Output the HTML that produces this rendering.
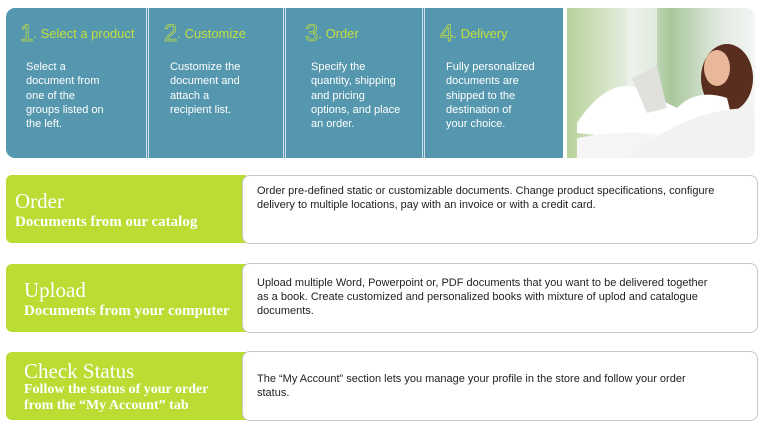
<!DOCTYPE html>
<html><head><style>
*{margin:0;padding:0;box-sizing:border-box}
body{width:763px;height:431px;background:#fff;position:relative;overflow:hidden;font-family:"Liberation Sans",sans-serif}
.panel{position:absolute;left:6px;top:8px;width:557px;height:150px;background:#5597ae;border-radius:9px 0 0 9px}
.div{position:absolute;top:8px;height:150px;width:3px;border-left:1px solid #cfe0e6;border-right:1px solid #cfe0e6;background:#5597ae}
.col{position:absolute;top:8px;color:#fff;font-size:11px;line-height:14.3px}
.col h{display:block;color:#c4df3b;font-size:13px;margin-top:19px;margin-bottom:9px;white-space:nowrap;height:24px}
.col h b{font-weight:normal;font-size:24px;color:transparent;-webkit-text-stroke:0.7px #c4df3b;vertical-align:-3px}
.col p{padding-left:6px}
.photo{position:absolute;left:567px;top:8px;width:188px;height:150px;border-radius:0 9px 9px 0;overflow:hidden;background:linear-gradient(90deg,#b8d29a 0%,#e8efe6 35%,#a8c79a 55%,#dfe8df 80%,#f4f6f4 100%)}
.g{position:absolute;left:6px;width:240px;background:#badc33;border-radius:6px 0 0 6px;color:#fff;font-family:"Liberation Serif",serif}
.g .t{font-size:21px}
.g .s{font-size:15px;font-weight:bold}
.w{position:absolute;left:242px;width:516px;border:1px solid #c8c8c8;border-radius:8px;background:#fff;font-size:11px;color:#222;line-height:14px;padding-left:14px}
</style></head><body>
<div class="panel"></div>
<div class="div" style="left:146px"></div>
<div class="div" style="left:283px"></div>
<div class="div" style="left:422px"></div>
<div class="col" style="left:20px;width:120px"><h><b>1</b>. Select a product</h><p>Select a<br>document from<br>one of the<br>groups listed on<br>the left.</p></div>
<div class="col" style="left:164px;width:115px"><h><b>2</b>. Customize</h><p>Customize the<br>document and<br>attach a<br>recipient list.</p></div>
<div class="col" style="left:305px;width:115px"><h><b>3</b>. Order</h><p>Specify the<br>quantity, shipping<br>and pricing<br>options, and place<br>an order.</p></div>
<div class="col" style="left:440px;width:120px"><h><b>4</b>. Delivery</h><p>Fully personalized<br>documents are<br>shipped to the<br>destination of<br>your choice.</p></div>
<div class="photo">
<svg width="188" height="150" viewBox="0 0 188 150">
<rect x="60" y="0" width="30" height="150" fill="#eef2ee" opacity=".7"/>
<ellipse cx="160" cy="70" rx="26" ry="34" fill="#5a2e1e"/>
<ellipse cx="150" cy="60" rx="13" ry="18" fill="#e9b89a"/>
<path d="M10 115 Q40 70 70 80 L110 100 Q130 80 160 90 L170 130 L100 140 Q60 130 10 125Z" fill="#fff"/>
<path d="M10 130 Q60 120 100 128 L110 150 L10 150Z" fill="#f5f5f5"/>
<path d="M60 150 Q120 100 185 100 L188 150Z" fill="#f2f2f0"/>
<path d="M65 70 L90 58 L100 100 L80 105Z" fill="#e0e0dc"/>
</svg>
</div>
<div class="g" style="top:175px;height:68px;padding:14px 0 0 9px"><div class="t">Order</div><div class="s">Documents from our catalog</div></div>
<div class="w" style="top:175px;height:69px;padding-top:8px">Order pre-defined static or customizable documents. Change product specifications, configure<br>delivery to multiple locations, pay with an invoice or with a credit card.</div>
<div class="g" style="top:264px;height:68px;padding:14px 0 0 18px"><div class="t">Upload</div><div class="s">Documents from your computer</div></div>
<div class="w" style="top:263px;height:70px;padding-top:12px">Upload multiple Word, Powerpoint or, PDF documents that you want to be delivered together<br>as a book. Create customized and personalized books with mixture of uplod and catalogue<br>documents.</div>
<div class="g" style="top:352px;height:68px;padding:8px 0 0 18px;line-height:16px"><div class="t" style="line-height:22px">Check Status</div><div class="s" style="font-size:14px">Follow the status of your order<br>from the “My Account” tab</div></div>
<div class="w" style="top:351px;height:70px;padding-top:20px">The “My Account” section lets you manage your profile in the store and follow your order<br>status.</div>
</body></html>
